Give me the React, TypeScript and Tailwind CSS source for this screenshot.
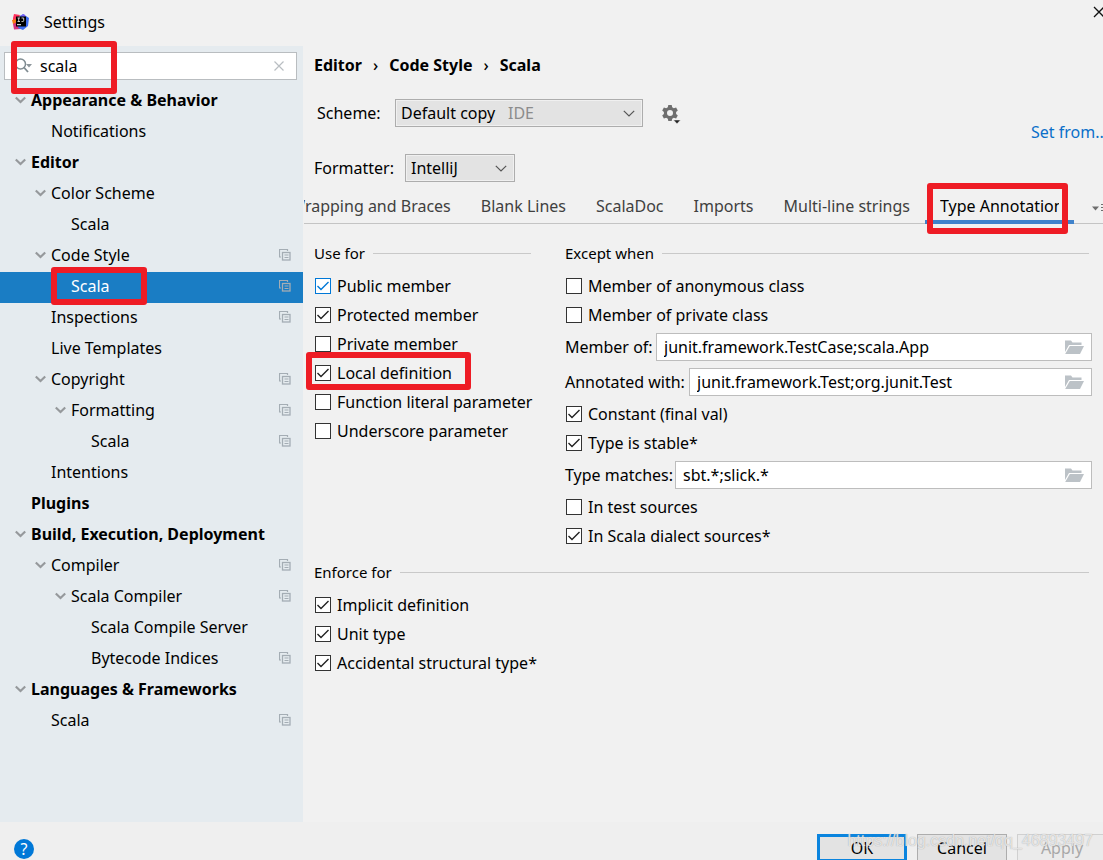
import { useState } from "react";
import type { ReactNode } from "react";

type TreeNode = {
  label: string;
  level: 0 | 1 | 2 | 3 | 4;
  open?: boolean;
  bold?: boolean;
  project?: boolean;
};

const TREE: TreeNode[] = [
  { label: "Appearance & Behavior", level: 0, open: true, bold: true },
  { label: "Notifications", level: 1 },
  { label: "Editor", level: 0, open: true, bold: true },
  { label: "Color Scheme", level: 1, open: true },
  { label: "Scala", level: 2 },
  { label: "Code Style", level: 1, open: true, project: true },
  { label: "Scala", level: 2, project: true },
  { label: "Inspections", level: 1, project: true },
  { label: "Live Templates", level: 1 },
  { label: "Copyright", level: 1, open: true, project: true },
  { label: "Formatting", level: 2, open: true, project: true },
  { label: "Scala", level: 3, project: true },
  { label: "Intentions", level: 1 },
  { label: "Plugins", level: 0, bold: true },
  { label: "Build, Execution, Deployment", level: 0, open: true, bold: true },
  { label: "Compiler", level: 1, open: true, project: true },
  { label: "Scala Compiler", level: 2, open: true, project: true },
  { label: "Scala Compile Server", level: 3 },
  { label: "Bytecode Indices", level: 3, project: true },
  { label: "Languages & Frameworks", level: 0, open: true, bold: true },
  { label: "Scala", level: 1, project: true },
];

const INDENT = ["pl-[15px]", "pl-[35px]", "pl-[55px]", "pl-[75px]", "pl-[95px]"];

function Marker({ className }: { className: string }) {
  return (
    <span
      aria-hidden="true"
      className={`pointer-events-none absolute z-10 rounded-[3px] border-6 border-[#ee1c25] ${className}`}
    />
  );
}

function Logo() {
  return (
    <svg width="18" height="18" viewBox="0 0 18 18" aria-hidden="true">
      <path d="M2 1 L8 2 L5 9 L1 11 L1 5 Z" fill="#fe315d" />
      <path d="M0 7 L5 6 L5 12 L1 11 Z" fill="#f97a12" />
      <path d="M1 11 L5 9 L9 16 L2 16.5 Z" fill="#d5337e" />
      <path d="M8 3 L11 1 L17 5 L16 13 L11 17 L6 15 Z" fill="#3c6cf0" />
      <path d="M8 3 L12 1 L14 4 Z" fill="#7a5cf5" />
      <rect x="4" y="3.500" width="10" height="10" fill="#000" />
      <path d="M5.500 5h2.500M6.700 5v3.500M5.500 8.500h2.500M9.500 5h2.200v2.700q0 .8-.8.8h-1.400" stroke="#ddd" strokeWidth="0.900" fill="none" />
      <path d="M5 11.700h4" stroke="#fff" strokeWidth="1" />
    </svg>
  );
}

function TreeChevron() {
  return (
    <svg width="11" height="8" viewBox="0 0 11 8" aria-hidden="true">
      <path d="M0.800 1.500 L5.500 6 L10.200 1.500" fill="none" stroke="#96999c" strokeWidth="2.200" />
    </svg>
  );
}

function ProjectIcon() {
  return (
    <svg width="12" height="12" viewBox="0 0 12 12" aria-hidden="true" fill="none" stroke="#a4adb4">
      <path d="M2 8H0.500V0.500H8.500V2" strokeWidth="1.200" />
      <rect x="3.500" y="3.500" width="7.500" height="7.500" strokeWidth="1.300" />
      <path d="M5.500 6h4M5.500 8.500h4" strokeWidth="1.100" />
    </svg>
  );
}

function FolderIcon() {
  return (
    <svg width="19" height="14" viewBox="0 0 19 14" aria-hidden="true" fill="#bcc2c7">
      <path d="M0 0.500h6l1.500 2h9v2.500h-12.500L0 12z" />
      <path d="M4.800 6h14.200l-4 8h-14.800z" />
    </svg>
  );
}

function Check({ label, on, accent }: { label: string; on?: boolean; accent?: boolean }) {
  const [checked, setChecked] = useState(!!on);
  return (
    <label className="flex h-[29px] items-center gap-[6px] pl-px whitespace-nowrap">
      <span className="grid shrink-0">
        <input
          type="checkbox"
          checked={checked}
          onChange={(e) => setChecked(e.target.checked)}
          className={`col-start-1 row-start-1 size-4 appearance-none border bg-white ${
            accent ? "border-[#0078d7]" : "border-[#333333]"
          }`}
        />
        {checked && (
          <svg
            width="16"
            height="16"
            viewBox="0 0 16 16"
            aria-hidden="true"
            className={`pointer-events-none col-start-1 row-start-1 ${accent ? "text-[#0078d7]" : "text-[#222222]"}`}
          >
            <path d="M2.500 8 L6 11.500 L13.500 4" fill="none" stroke="currentColor" strokeWidth="1.400" />
          </svg>
        )}
      </span>
      {label}
    </label>
  );
}

function Field({ id, label, value, width }: { id: string; label: string; value: string; width: string }) {
  return (
    <div className="flex h-[35px] items-center">
      <label htmlFor={id} className={`shrink-0 whitespace-nowrap ${width}`}>
        {label}
      </label>
      <div className="flex h-7 min-w-0 flex-1 items-center border border-[#bdbdbd] bg-white px-[7px]">
        <input id={id} defaultValue={value} className="min-w-0 flex-1 bg-transparent outline-none" />
        <button type="button" aria-label="Browse">
          <FolderIcon />
        </button>
      </div>
    </div>
  );
}

function Group({ title, children, inset }: { title: string; children: ReactNode; inset?: boolean }) {
  return (
    <section>
      <div className={`mb-[5px] flex h-[26px] items-center gap-2 text-[15px] ${inset ? "mr-[3px]" : ""}`}>
        <h2>{title}</h2>
        <span className="h-px flex-1 bg-[#c9c9c9]" />
      </div>
      {children}
    </section>
  );
}

function Dropdown({ id, value, note, width }: { id: string; value: string; note?: string; width: string }) {
  return (
    <div className={`relative grid h-7 items-center border border-[#adadad] bg-[#e3e3e3] ring-1 ring-[#f0f0f0] ring-inset ${width}`}>
      <select id={id} className="col-start-1 row-start-1 w-full appearance-none bg-transparent pr-6 pl-[5px] outline-none">
        <option>{value}</option>
      </select>
      {note && <span className="pointer-events-none absolute left-28 text-[#8c8c8c]">{note}</span>}
      <svg
        width="12"
        height="7"
        viewBox="0 0 12 7"
        aria-hidden="true"
        className="pointer-events-none col-start-1 row-start-1 mr-[7px] justify-self-end"
      >
        <path d="M0.800 0.800 L6 6 L11.200 0.800" fill="none" stroke="#555" strokeWidth="1.200" />
      </svg>
    </div>
  );
}

function Gear() {
  return (
    <svg width="20" height="20" viewBox="0 0 20 20" aria-hidden="true">
      <g fill="#6e6e6e">
        <path
          fillRule="evenodd"
          d="M6.300 0h3.400l.5 2.300 1.600.9 2.300-.7 1.700 2.900-1.700 1.700v1.800l1.700 1.700-1.700 2.900-2.300-.7-1.600.9-.5 2.300H6.300l-.5-2.300-1.600-.9-2.300.7L.2 10.600l1.700-1.700V7.100L.2 5.400l1.700-2.900 2.300.7 1.600-.9zM8 5a3 3 0 1 0 0 6 3 3 0 0 0 0-6z"
        />
      </g>
      <path d="M11.500 15h7l-3.500 3.800z" fill="#222" stroke="#f1f1f1" strokeWidth="0.500" />
    </svg>
  );
}

const TABS = ["Wrapping and Braces", "Blank Lines", "ScalaDoc", "Imports", "Multi-line strings"];

export default function App() {
  const [selected, setSelected] = useState(6);
  return (
    <div className="flex h-screen min-h-[500px] flex-col overflow-hidden bg-[#f1f1f1] font-['Noto_Sans','Open_Sans',sans-serif] text-[16px] leading-6 text-black">
      <header className="flex h-[46px] shrink-0 items-center pb-[2px] pl-3">
        <Logo />
        <h1 className="ml-[14px]">Settings</h1>
        <button type="button" aria-label="Close" className="-mr-[2px] mb-5 ml-auto">
          <svg width="12" height="12" viewBox="0 0 12 12" aria-hidden="true">
            <path d="M1 1 L11 11 M11 1 L1 11" stroke="#111" strokeWidth="1.300" />
          </svg>
        </button>
      </header>

      <div className="flex min-h-0 flex-1">
        <aside className="w-[303px] shrink-0 bg-[#e5ebef] pt-[6px]">
          <div className="relative mr-[6px] ml-1 flex h-7 items-center border border-[#b9bdc0] bg-white pr-[11px] pl-[10px]">
            <svg width="18" height="16" viewBox="0 0 18 16" aria-hidden="true">
              <circle cx="5.500" cy="6" r="5" fill="none" stroke="#7f8b91" strokeWidth="1.500" />
              <path d="M9 9.500 L13 14" stroke="#7f8b91" strokeWidth="1.800" />
              <path d="M11 6h6l-3 3.500z" fill="#8d969b" />
            </svg>
            <input aria-label="Search settings" defaultValue="scala" className="ml-[7px] min-w-0 flex-1 bg-transparent outline-none" />
            <button type="button" aria-label="Clear search">
              <svg width="12" height="12" viewBox="0 0 12 12" aria-hidden="true">
                <path d="M1.500 1.500 L10.500 10.500 M10.500 1.500 L1.500 10.500" stroke="#b9bec2" strokeWidth="1.200" />
              </svg>
            </button>
            <Marker className="-top-3 left-[6px] h-[53px] w-[106px]" />
          </div>
          <ul className="pt-[6px]">
            {TREE.map((node, i) => {
              const active = selected === i;
              return (
                <li key={i} className="relative">
                  <button
                    type="button"
                    onClick={() => setSelected(i)}
                    className={`flex h-[31px] w-full items-center pr-3 pb-1 text-left whitespace-nowrap ${INDENT[node.level]} ${
                      active ? "bg-[#1a7dc4] text-white" : ""
                    } ${node.bold ? "font-bold" : ""}`}
                  >
                    <span className="w-4 shrink-0">{node.open && <TreeChevron />}</span>
                    <span className="flex-1">{node.label}</span>
                    {node.project && <ProjectIcon />}
                  </button>
                  {i === 6 && <Marker className="-top-[5px] left-[51px] h-[38px] w-24" />}
                </li>
              );
            })}
          </ul>
        </aside>

        <main className="min-w-0 flex-1 pl-px">
          <nav aria-label="Breadcrumb" className="mt-[6px] flex h-[26px] items-center gap-[11px] pl-[10px] font-bold">
            <span>Editor</span>
            <span className="font-medium">›</span>
            <span>Code Style</span>
            <span className="font-medium">›</span>
            <span>Scala</span>
          </nav>

          <div className="mt-[21px] flex h-7 items-center pl-[13px]">
            <label htmlFor="scheme" className="w-[78px]">
              Scheme:
            </label>
            <Dropdown id="scheme" value="Default copy" note="IDE" width="w-[248px]" />
            <button type="button" aria-label="Scheme actions" className="mt-1 ml-[19px]">
              <Gear />
            </button>
          </div>
          <div className="-mt-[7px] flex h-6 justify-end overflow-hidden">
            <a href="#set-from" className="w-[72px] whitespace-nowrap text-[#0a6fc9]">
              Set from...
            </a>
          </div>
          <div className="mt-[10px] flex h-7 items-center pl-[10px]">
            <label htmlFor="formatter" className="w-[91px]">
              Formatter:
            </label>
            <Dropdown id="formatter" value="IntelliJ" width="w-[110px]" />
          </div>

          <div className="mt-[6px] flex h-9 border-b border-[#c4c4c4]">
            <div role="tablist" className="flex min-w-0 flex-1 justify-end overflow-x-clip whitespace-nowrap text-[#404040]">
              {TABS.map((tab) => (
                <button key={tab} type="button" role="tab" aria-selected="false" className="shrink-0 px-[15px]">
                  {tab}
                </button>
              ))}
              <div className="relative w-[149px] shrink-0">
                <button
                  type="button"
                  role="tab"
                  aria-selected="true"
                  className="h-9 w-full border-b-4 border-[#3f82cb] px-[15px] pt-1 text-left text-black"
                >
                  <span className="block overflow-hidden">Type Annotations</span>
                </button>
                <Marker className="-top-[5px] left-[2px] h-[51px] w-[141px]" />
              </div>
            </div>
            <button type="button" aria-label="More tabs" className="ml-[18px] w-[11px] shrink-0 overflow-hidden pt-1">
              <svg width="16" height="10" viewBox="0 0 16 10" aria-hidden="true">
                <path d="M0 3.500h7l-3.500 4z" fill="#6e6e6e" />
                <path d="M9 1.500h7M9 4.500h7M9 7.500h7" stroke="#6e6e6e" strokeWidth="1.200" />
              </svg>
            </button>
          </div>

          <div className="pt-4 pr-[11px] pl-[10px]">
            <div className="grid grid-cols-[217px_minmax(0,1fr)] gap-x-[34px]">
              <Group title="Use for">
                <Check label="Public member" on accent />
                <Check label="Protected member" on />
                <Check label="Private member" />
                <div className="relative">
                  <Check label="Local definition" on />
                  <Marker className="-top-[6px] -left-2 h-[38px] w-[165px]" />
                </div>
                <Check label="Function literal parameter" />
                <Check label="Underscore parameter" />
              </Group>
              <Group title="Except when" inset>
                <Check label="Member of anonymous class" />
                <Check label="Member of private class" />
                <Field id="member-of" label="Member of:" value="junit.framework.TestCase;scala.App" width="w-[91px]" />
                <Field id="annotated" label="Annotated with:" value="junit.framework.Test;org.junit.Test" width="w-[124px]" />
                <Check label="Constant (final val)" on />
                <Check label="Type is stable*" on />
                <Field id="type-matches" label="Type matches:" value="sbt.*;slick.*" width="w-[110px]" />
                <Check label="In test sources" />
                <Check label="In Scala dialect sources*" on />
              </Group>
            </div>
            <div className="mt-[9px]">
              <Group title="Enforce for" inset>
                <Check label="Implicit definition" on />
                <Check label="Unit type" on />
                <Check label="Accidental structural type*" on />
              </Group>
            </div>
          </div>
        </main>
      </div>

      <footer className="relative flex h-[38px] shrink-0 items-start bg-[#efefef] pt-3 pl-[14px]">
        <button
          type="button"
          aria-label="Help"
          className="mt-[5px] flex size-5 shrink-0 items-center justify-center rounded-full bg-[#0078d7] text-[16px] leading-5 text-white"
        >
          ?
        </button>
        <div className="-mr-1 ml-auto flex shrink-0 gap-[10px]">
          <button type="button" className="h-7 w-[90px] border-3 border-[#0a84de] bg-[#e3e3e3] leading-5">
            OK
          </button>
          <button type="button" className="h-7 w-[90px] border border-[#adadad] bg-[#e3e3e3] leading-6">
            Cancel
          </button>
          <button type="button" disabled className="h-7 w-[90px] border border-[#d0d0d0] bg-[#ebebeb] leading-6 text-[#a8a8a8]">
            Apply
          </button>
        </div>
        <span className="pointer-events-none absolute top-[7px] right-[10px] font-['Liberation_Sans',sans-serif] text-[16px] text-white/70 [text-shadow:0_0_1px_#9a9a9a]">
          https://blog.csdn.net/qq_46893497
        </span>
      </footer>
    </div>
  );
}
